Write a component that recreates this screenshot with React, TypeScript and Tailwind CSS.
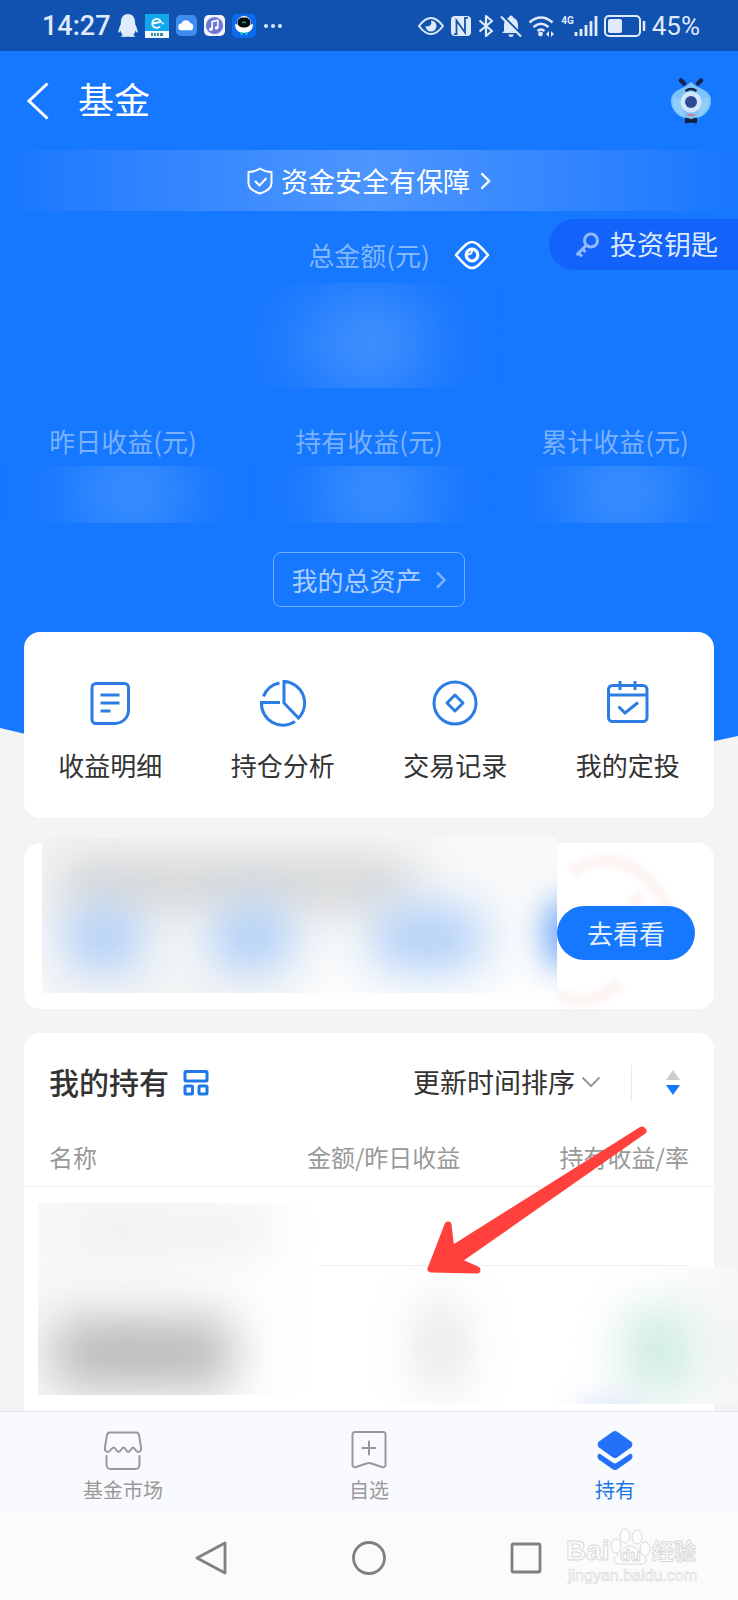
import type { ReactNode } from 'react';
import clsx from 'clsx';
import { FaQq } from 'react-icons/fa';

const stats = ['昨日收益(元)', '持有收益(元)', '累计收益(元)'];

const shortcuts: { label: string; icon: ReactNode }[] = [
  {
    label: '收益明细',
    icon: (
      <>
        <path d="M10 4.500h28.500a4 4 0 0 1 4 4V31a13.500 13.500 0 0 1-13.500 13.500H10a4 4 0 0 1-4-4v-32a4 4 0 0 1 4-4Z" />
        <path d="M14.500 16h19M14.500 24h19M14.500 32h10" />
      </>
    ),
  },
  {
    label: '持仓分析',
    icon: (
      <>
        <path d="M25 2.500V24l14.500 15A21.500 21.500 0 0 0 25 2.500Z" />
        <path d="M21 23.500H2.500A21.500 21.500 0 0 0 36 42.500" />
        <path d="M4.500 17.500A21.500 21.500 0 0 1 20.500 4" />
      </>
    ),
  },
  {
    label: '交易记录',
    icon: (
      <>
        <circle cx="24" cy="24" r="21" />
        <path d="m24 16 8 8-8 8-8-8Z" strokeLinejoin="round" />
      </>
    ),
  },
  {
    label: '我的定投',
    icon: (
      <>
        <rect x="4.500" y="6.500" width="38.500" height="36" rx="4" />
        <path d="M5 16h38M16 2v9M31 2v9M14.500 27.500l6.500 6.500L34 23.500" />
      </>
    ),
  },
];

const tabs: { label: string; active?: boolean; icon: ReactNode }[] = [
  {
    label: '基金市场',
    icon: (
      <g fill="none" stroke="#999" strokeWidth="2" strokeLinecap="round" strokeLinejoin="round">
        <path d="M7 2.500h26q2.500 0 3 2.500l2 12q.500 5-3 5c-2.500 0-3-4.500-5-4.500s-2.500 4.500-4.700 4.500-2.700-4.500-4.700-4.500-3 4.500-5 4.500-3-4.500-5-4.500S7 22 5 22q-3.500 0-3-5L4 5q.500-2.500 3-2.500Z" />
        <path d="M3.500 26v9a4 4 0 0 0 4 4h25a4 4 0 0 0 4-4v-9" />
      </g>
    ),
  },
  {
    label: '自选',
    icon: (
      <g fill="none" stroke="#999" strokeWidth="2" strokeLinecap="round" strokeLinejoin="round">
        <path d="M6 2h28a2.500 2.500 0 0 1 2.500 2.500V35c0 2-1.500 2.500-3.500 2l-10.500-3.500q-2.500-1-5 0L7 37c-2 .500-3.500 0-3.500-2V4.500A2.500 2.500 0 0 1 6 2Z" />
        <path d="M20 11.500v13M13.500 18h13" />
      </g>
    ),
  },
  {
    label: '持有',
    active: true,
    icon: (
      <g fill="#2470f8">
        <path d="M18 1.500a4 4 0 0 1 4 0l14 10a4 4 0 0 1 0 6L22 27.500a4 4 0 0 1-4 0L4 17.500a4 4 0 0 1 0-6Z" />
        <path d="M3 24.500c1-1 2-1 3 0L18.500 33a3 3 0 0 0 3 0L34 24.500c1-1 2-1 3 0 1 2 .500 4-1.500 5.500L22 39.500a4 4 0 0 1-4 0L4.500 30C2.500 28.500 2 26.500 3 24.500Z" />
      </g>
    ),
  },
];

function Chevron({ className }: { className?: string }) {
  return (
    <svg viewBox="0 0 12 20" className={className} fill="none" stroke="currentColor" strokeWidth="2.600">
      <path d="m1.500 1.500 8.500 8.500-8.500 8.500" />
    </svg>
  );
}

function StatusBar() {
  return (
    <div className="flex h-[51px] items-center justify-between bg-[#1152b0] pr-[38px] pl-[42px] text-[#dfeafb]">
      <div className="flex items-center gap-[7px]">
        <span className="font-[Roboto,sans-serif] text-[27px] leading-8 font-medium">14:27</span>
        <FaQq className="h-[23px] w-5" />
        <svg viewBox="0 0 24 24" className="size-6">
          <path d="M0 0h24v24H0z" fill="#12a8ec" />
          <path d="M0 17h24v7H0z" fill="#f4fbff" />
          <path d="M7 9.500 16 8A4.500 4.500 0 1 0 15 12.500" fill="none" stroke="#fff" strokeWidth="1.800" />
          <circle cx="18" cy="9.500" r="1" fill="#fff" />
          <path d="M6 20.500h2m1 0h2m1 0h2m1 0h3" stroke="#3a8e9e" strokeWidth="3" />
        </svg>
        <svg viewBox="0 0 22 22" className="size-[21px]">
          <rect width="22" height="22" rx="5" fill="#3d8df0" />
          <path d="M6 16a3.500 3.500 0 0 1-.300-7A5 5 0 0 1 15 8.500a4 4 0 0 1 1 7.500Z" fill="#fff" />
        </svg>
        <svg viewBox="0 0 22 22" className="size-[21px]">
          <rect width="22" height="22" rx="5" fill="#f3f2fb" />
          <circle cx="11" cy="11" r="9" fill="#6d78d2" />
          <path d="M8.500 15V7l6-1.500v8" fill="none" stroke="#fff" strokeWidth="1.600" />
          <circle cx="7.200" cy="15" r="1.800" fill="#fff" />
          <circle cx="13.200" cy="13.500" r="1.800" fill="#fff" />
        </svg>
        <svg viewBox="0 0 24 24" className="size-6">
          <rect width="24" height="24" rx="5" fill="#0b6af0" />
          <path d="M3 10c1 0 2 1 3 1h12c1 0 2-1 3-1 0 6-4 9-9 9s-9-3-9-9Z" fill="#fff" />
          <circle cx="12" cy="9" r="7" fill="#fff" />
          <rect x="5.500" y="3.500" width="13" height="10" rx="5" fill="#0a0f14" />
          <path d="M10 9q2-2.500 4 0" fill="none" stroke="#2de0b0" />
          <path d="M9.500 18v3M14.500 18v3" stroke="#25d0c8" strokeWidth="2" />
        </svg>
        <svg viewBox="0 0 20 6" className="h-[6px] w-5" fill="currentColor">
          <circle cx="3" cy="3" r="2" />
          <circle cx="10" cy="3" r="2" />
          <circle cx="17" cy="3" r="2" />
        </svg>
      </div>

      <div className="flex items-center gap-[6px]">
        <svg viewBox="0 0 26 18" className="h-[18px] w-[26px]">
          <path d="M1 9q12-16 24 0-12 16-24 0Z" fill="none" stroke="currentColor" strokeWidth="2" />
          <path d="M13 3.500a5.500 5.500 0 1 1-5.500 5.500q3.500 1 5-1t.500-4.500Z" fill="currentColor" />
        </svg>
        <svg viewBox="0 0 22 22" className="size-[22px]">
          <rect x="1" y="1" width="20" height="20" rx="4" fill="currentColor" />
          <path
            d="M6.500 20V5.500l8.500 12V2M4 19.500l3-1M18 2.500l-3 1"
            fill="none"
            stroke="#1152b0"
            strokeWidth="1.800"
          />
        </svg>
        <svg viewBox="0 0 16 24" className="h-6 w-4" fill="none" stroke="currentColor" strokeWidth="2.200">
          <path d="M1.500 6.500 14 17l-6 5V2l6 5L1.500 17.500" strokeLinejoin="round" />
        </svg>
        <svg viewBox="0 0 22 24" className="h-6 w-[22px]">
          <path d="M4 17V11c0-4 2-6.500 5-7.500a2 2 0 0 1 4 0c3 1 5 3.500 5 7.500v6l2 2H2Z" fill="currentColor" />
          <path d="M8.500 20.500h5a2.500 2.500 0 0 1-5 0Z" fill="currentColor" />
          <path d="m2.500 1.500 20 20" stroke="#1152b0" strokeWidth="2" />
          <path d="m1 2.500 20 20" stroke="currentColor" strokeWidth="2" />
        </svg>
        <svg viewBox="0 0 27 22" className="h-[22px] w-[27px]" fill="none" stroke="currentColor">
          <path d="M1.500 7.500q11.500-10 23 0M5.500 12q7.500-6.500 15 0" strokeWidth="2.600" />
          <path d="M9.500 16q3.500-3 7 0" strokeWidth="2.400" />
          <circle cx="12.500" cy="19" r="2.400" fill="currentColor" stroke="none" />
          <path d="m21 16-3 3 3 3ZM23 16l3 3-3 3Z" fill="currentColor" stroke="none" />
        </svg>
        <div className="flex items-center">
          <span className="self-start font-[Roboto,sans-serif] text-[10px] leading-3 font-bold">4G</span>
          <svg viewBox="0 0 24 22" className="h-[22px] w-6" stroke="currentColor" strokeWidth="2.800">
            <path d="M2 21v-4M7 21v-7M12 21V10M17 21V6M22 21V1" />
          </svg>
        </div>
        <svg viewBox="0 0 42 22" className="h-[22px] w-[42px]">
          <rect x="1" y="1" width="35" height="20" rx="4" fill="none" stroke="currentColor" strokeWidth="2" />
          <rect x="4" y="4" width="14" height="14" rx="2" fill="currentColor" />
          <path d="M40 6v10" stroke="currentColor" strokeWidth="2.500" />
        </svg>
        <span className="font-[Roboto,sans-serif] text-[26px] leading-8">45%</span>
      </div>
    </div>
  );
}

function Hero() {
  return (
    <div>
      <div className="bg-[#1677ff] pb-[121px] text-white">
        <header className="flex h-[99px] items-center px-[26px]">
          <button type="button" aria-label="返回">
            <svg viewBox="0 0 24 38" className="h-[38px] w-6" fill="none" stroke="currentColor" strokeWidth="3">
              <path d="M21.500 1.500 3 19l18.500 17.500" />
            </svg>
          </button>
          <h1 className="ml-7 pb-[6px] text-[36px] leading-[48px]">基金</h1>
          <button type="button" aria-label="助手" className="ml-auto">
            <svg viewBox="0 0 42 46" className="h-[46px] w-[42px]">
              <path d="M21 4q4 4 11 7c6 3 9 6 9 12 0 10-9 18-20 18S1 33 1 23c0-6 3-9 9-12q7-3 11-7Z" fill="#7cc4f8" />
              <path d="M3 20q7-2 10 6l1 13Q2 33 3 20ZM39 20q-7-2-10 6l-1 13q12-6 11-19Z" fill="#90cdfa" />
              <path d="m11 2.500 3 3M31 2.500l-3 3" stroke="#14244c" strokeWidth="4.500" strokeLinecap="round" />
              <path d="M15.500 13q5.500-4 11 0" fill="none" stroke="#14244c" strokeWidth="2.400" />
              <circle cx="21" cy="24" r="10.500" fill="#d2e6fc" />
              <circle cx="21" cy="24" r="6" fill="#2f4b96" />
              <path d="M17 37h8" stroke="#d87c8c" strokeWidth="2" />
              <path d="m15.500 40 5.500 1.500 5.500-1.500v5L21 44l-5.500 1Z" fill="#14213c" stroke="#14213c" strokeLinejoin="round" />
            </svg>
          </button>
        </header>

        <a
          href="#safety"
          className="flex h-[61px] items-center justify-center bg-linear-to-r from-[#1677ff] via-[#4c95fe] to-[#1677ff] text-[27px] leading-9"
        >
          <svg
            viewBox="0 0 26 28"
            className="mr-2 h-7 w-[26px]"
            fill="none"
            stroke="currentColor"
            strokeWidth="2"
            strokeLinejoin="round"
          >
            <path d="M13 1.500q5 3.500 11.500 3.500v11c0 5-5 8.500-11.500 10.500C6.500 24.500 1.500 21 1.500 16V5Q8 5 13 1.500Z" />
            <path d="m8 14 4.500 4.500 7-7.500" />
          </svg>
          资金安全有保障
          <Chevron className="ml-[10px] h-[18px] w-[11px]" />
        </a>

        <div className="grid h-[72px] grid-cols-[1fr_auto_1fr] pt-2">
          <p className="col-start-2 pt-[18px] text-[26px] leading-9 text-[#83b7fc]">总金额(元)</p>
          <div className="flex items-start justify-between">
            <button type="button" aria-label="显示金额" className="mt-[21px] ml-6">
              <svg viewBox="0 0 36 30" className="h-[30px] w-9" fill="none" stroke="currentColor" strokeWidth="2.600">
                <path d="M2 15q5-6 10-10.500 6-5 12 0Q29 9 34 15q-5 6-10 10.500-6 5-12 0Q7 21 2 15Z" strokeLinejoin="round" />
                <circle cx="18" cy="15" r="5.800" strokeWidth="3.200" />
                <path d="M18 10q.500 4-4 4.500" strokeWidth="2" />
              </svg>
            </button>
            <a
              href="#key"
              className="flex h-[51px] items-center gap-[10px] rounded-l-full bg-[#1362fa] pr-5 pl-[25px] text-[27px] text-[#dce9fe]"
            >
              <svg viewBox="0 0 26 26" className="size-[26px]" fill="none" stroke="#94b8fc" strokeWidth="3">
                <circle cx="17" cy="8.500" r="6.500" />
                <path d="M12.500 13 2.500 23M3.500 20l4.500 4.500M8 16.500l3.500 3.500" />
              </svg>
              投资钥匙
            </a>
          </div>
        </div>

        <div className="relative mx-auto h-[105px] w-96 overflow-hidden">
          <span className="absolute top-9 left-[104px] h-12 w-24 rounded-full bg-[#4a96fc] opacity-70 blur-2xl" />
          <span className="absolute top-7 left-[156px] h-16 w-[88px] rounded-full bg-[#6caafa] blur-2xl" />
        </div>

        <div className="mt-[35px] grid grid-cols-3">
          {stats.map((label) => (
            <div key={label} className="text-center">
              <p className="text-[26px] leading-9 text-[#79b1fc]">{label}</p>
              <div className="relative mt-[7px] h-[57px] overflow-hidden">
                <span className="absolute -top-3 right-[70px] left-[86px] h-[76px] rounded-full bg-[#5ea6fc] blur-2xl" />
              </div>
            </div>
          ))}
        </div>

        <div className="mt-[29px] flex justify-center">
          <a
            href="#assets"
            className="flex h-[55px] items-center gap-[13px] rounded-lg border border-[#6eacfc] px-[17px] text-[26px] text-[#a9cefd]"
          >
            我的总资产
            <Chevron className="h-[18px] w-3 text-[#81b4fd]" />
          </a>
        </div>
      </div>
      <svg viewBox="0 0 738 50" preserveAspectRatio="none" className="block h-[50px] w-full">
        <path d="M0 0q369 92 738 8V0Z" fill="#1677ff" />
      </svg>
    </div>
  );
}

function Shortcuts() {
  return (
    <nav className="relative mx-6 -mt-[146px] grid h-[186px] grid-cols-4 rounded-2xl bg-white pt-[47px]" aria-label="快捷入口">
      {shortcuts.map((item) => (
        <a key={item.label} href="#shortcut" className="flex flex-col items-center gap-5">
          <svg viewBox="0 0 48 48" className="size-12" fill="none" stroke="#2b7de4" strokeWidth="3">
            {item.icon}
          </svg>
          <span className="text-[26px] leading-9 text-[#333]">{item.label}</span>
        </a>
      ))}
    </nav>
  );
}

function Promo() {
  return (
    <section className="mx-6 mt-[25px] flex h-[166px] items-start rounded-2xl bg-white pr-[19px] pl-[18px]">
      <div className="relative -mt-[6px] h-[156px] flex-1 overflow-hidden bg-linear-to-br from-[#f4f4f4] to-[#fdfefe]">
        <span className="absolute top-6 left-5 h-11 w-[350px] bg-[#cdcfd0] blur-xl" />
        <span className="absolute bottom-0 left-5 h-3 w-56 bg-[#dfe2e4] blur-xl" />
        <span className="absolute top-[70px] left-[22px] h-[62px] w-20 rounded-full bg-[#a6caf7] blur-xl" />
        <span className="absolute top-[70px] left-[168px] h-[62px] w-[84px] rounded-full bg-[#a6caf7] blur-xl" />
        <span className="absolute top-[70px] left-[328px] h-[62px] w-[116px] rounded-full bg-[#accdf7] blur-xl" />
        <span className="absolute top-[62px] -right-8 h-[70px] w-11 rounded-full bg-[#6ea6f8] blur-lg" />
      </div>
      <div className="relative pt-[63px]">
        <svg
          viewBox="0 0 138 166"
          className="absolute inset-x-0 top-0 w-full blur-[2px]"
          fill="none"
          stroke="#fdf5f4"
          strokeWidth="13"
        >
          <path d="M14 29q42-24 75 5 15 16 22 32M0 151q32 16 64-11M74 62l12-10" />
        </svg>
        <button
          type="button"
          className="relative h-[54px] w-[138px] rounded-full bg-[#1677ff] pb-[2px] text-[26px] text-[#e4f0ff]"
        >
          去看看
        </button>
      </div>
    </section>
  );
}

function Holdings() {
  return (
    <section className="relative mx-6 mt-6 flex-1 rounded-t-2xl bg-white pt-7">
      <div className="flex h-11 items-center pr-[34px] pl-[25px]">
        <h2 className="pb-1 text-[30px] leading-10 font-medium text-[#333]">我的持有</h2>
        <button type="button" aria-label="切换视图" className="ml-[14px]">
          <svg viewBox="0 0 26 26" className="size-[26px]" fill="none" stroke="#1f78ea" strokeWidth="3">
            <rect x="2" y="1.500" width="22" height="9.500" rx="1" />
            <rect x="2" y="16" width="7.500" height="8" rx="1" />
            <rect x="16" y="16" width="8" height="8" rx="1" />
          </svg>
        </button>
        <button type="button" className="ml-auto flex items-center gap-[6px] pb-[2px] text-[27px] leading-9 text-[#333]">
          更新时间排序
          <svg viewBox="0 0 20 12" className="h-3 w-5" fill="none" stroke="#999" strokeWidth="2">
            <path d="m1.500 1.500 8.500 8.500 8.500-8.500" />
          </svg>
        </button>
        <div className="ml-[30px] h-9 w-px bg-[#e8e8e8]" />
        <button type="button" aria-label="排序方向" className="ml-[34px]">
          <svg viewBox="0 0 14 26" className="h-[26px] w-[14px]">
            <path d="m7 0 7 10H0Z" fill="#ccc" />
            <path d="M0 15h14l-7 10Z" fill="#1677ff" />
          </svg>
        </button>
      </div>

      <table className="mt-[27px] w-full table-fixed">
        <thead className="border-b border-[#eee] text-left text-[24px] leading-[50px] text-[#999]">
          <tr>
            <th className="w-[41%] pb-1 pl-[25px] font-normal">名称</th>
            <th className="w-[29%] pb-1 font-normal whitespace-nowrap">金额/昨日收益</th>
            <th className="pr-[25px] pb-1 text-right font-normal whitespace-nowrap">持有收益/率</th>
          </tr>
        </thead>
        <tbody>
          <tr className="h-20 align-top">
            <td rowSpan={2} className="pt-4 pl-[14px]">
              <div className="relative -mr-3 h-48 overflow-hidden bg-linear-to-r from-[#f9f8f8] to-white">
                <span className="absolute top-3 left-10 h-8 w-48 bg-[#ececec] blur-xl" />
                <span className="absolute top-[116px] left-4 h-[68px] w-[178px] rounded-2xl bg-[#b9b9b9] blur-xl" />
              </div>
            </td>
            <td colSpan={2} className="pr-[25px] pl-3">
              <div className="h-[79px] border-b border-[#eee]" />
            </td>
          </tr>
          <tr className="align-top">
            <td colSpan={2} className="pl-9">
              <div className="relative -mr-6 h-[137px] overflow-hidden bg-linear-to-r from-white from-80% to-[#f5f6f6]">
                <span className="absolute top-8 left-[76px] h-24 w-11 rounded-full bg-[#e4e4e4] blur-xl" />
                <span className="absolute top-9 left-[280px] h-24 w-[72px] rounded-full bg-[#cdebe2] blur-xl" />
                <span className="absolute -bottom-5 left-[236px] h-5 w-16 rounded-full bg-[#ccd8f6] blur-lg" />
              </div>
            </td>
          </tr>
        </tbody>
      </table>

      <svg viewBox="0 0 228 156" className="absolute top-[89px] right-[62px] h-[156px] w-[228px]">
        <path
          d="M218 8 27 128l-3-25L7 147l46 1-20-9L219 9Z"
          fill="#ff403c"
          stroke="#ff403c"
          strokeWidth="7"
          strokeLinejoin="round"
        />
      </svg>
    </section>
  );
}

function TabBar() {
  return (
    <nav className="grid h-[104px] shrink-0 grid-cols-3 border-t border-[#e3e5e9] bg-[#f9fafe] pt-[18px]" aria-label="主导航">
      {tabs.map((tab) => (
        <a
          key={tab.label}
          href="#tab"
          className={clsx(
            'flex flex-col items-center gap-[7px] text-[20px] leading-[26px]',
            tab.active ? 'text-[#1e74e2]' : 'text-[#999]',
          )}
        >
          <svg viewBox="0 0 40 40" className="size-10">
            {tab.icon}
          </svg>
          {tab.label}
        </a>
      ))}
    </nav>
  );
}

function SystemNav() {
  return (
    <div className="relative flex h-[85px] shrink-0 items-center justify-center bg-[#fbfbfb] text-[#808080]">
      <button type="button" aria-label="后退" className="flex w-[157px] justify-center">
        <svg viewBox="0 0 34 34" className="size-[34px]" fill="none" stroke="currentColor" strokeWidth="2.800" strokeLinejoin="round">
          <path d="M30 2v30L2 17Z" />
        </svg>
      </button>
      <button type="button" aria-label="主屏幕" className="flex w-[157px] justify-center">
        <svg viewBox="0 0 34 34" className="size-[34px]" fill="none" stroke="currentColor" strokeWidth="2.800">
          <circle cx="17" cy="17" r="15.500" />
        </svg>
      </button>
      <button type="button" aria-label="最近任务" className="flex w-[157px] justify-center">
        <svg viewBox="0 0 34 34" className="size-[34px]" fill="none" stroke="currentColor" strokeWidth="2.800">
          <rect x="3" y="3" width="28" height="28" rx="1.500" />
        </svg>
      </button>

      <svg viewBox="0 0 136 68" className="absolute top-1 right-[37px] h-[68px] w-[136px]" fill="#fdfdfd" stroke="#d9d9d9">
        <text x="1" y="41" fontSize="28" fontWeight="bold" fontFamily="'Liberation Sans', sans-serif">Bai</text>
        <ellipse cx="51" cy="27" rx="5" ry="7" />
        <ellipse cx="60" cy="17" rx="5" ry="7" />
        <ellipse cx="72" cy="18" rx="5" ry="7" />
        <ellipse cx="80" cy="30" rx="5" ry="7" />
        <path d="M65 27c6 0 8 5 13 9s4 9-3 9H55c-7 0-8-5-3-9s7-9 13-9Z" />
        <text x="55" y="42" fontSize="17" fontWeight="bold" fontFamily="'Liberation Sans', sans-serif">du</text>
        <text x="87" y="40" fontSize="22" fontWeight="bold" fontFamily="'Noto Sans CJK SC', sans-serif">经验</text>
        <text x="3" y="62" fontSize="16" strokeWidth="0.600" fontFamily="'Liberation Sans', sans-serif">jingyan.baidu.com</text>
      </svg>
    </div>
  );
}

export default function App() {
  return (
    <div className="flex min-h-screen flex-col overflow-x-hidden bg-[#f4f4f4] font-['Noto_Sans_CJK_SC',sans-serif]">
      <StatusBar />
      <Hero />
      <Shortcuts />
      <Promo />
      <Holdings />
      <TabBar />
      <SystemNav />
    </div>
  );
}
